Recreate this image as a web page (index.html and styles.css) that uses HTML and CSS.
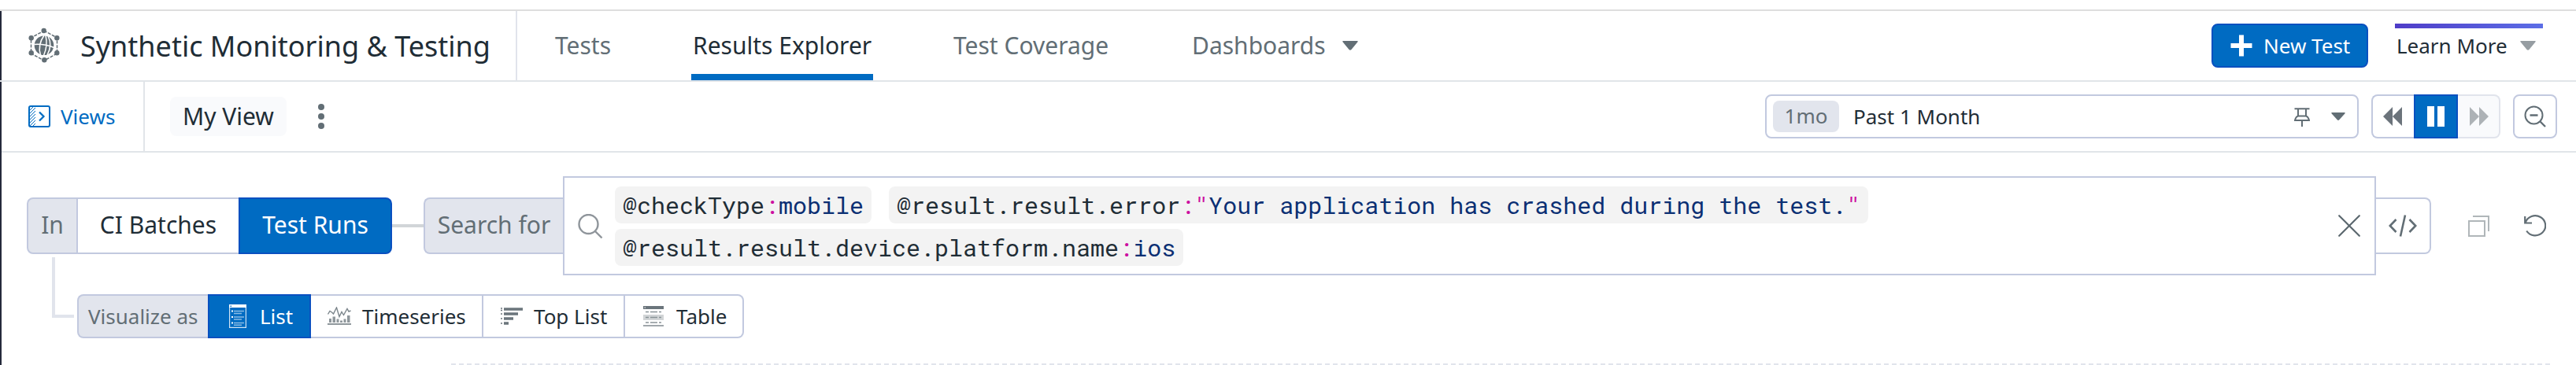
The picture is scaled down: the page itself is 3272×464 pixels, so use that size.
FILE: index.html
```
<!DOCTYPE html>
<html lang="en">
<head>
<meta charset="utf-8">
<title>Synthetic Monitoring &amp; Testing</title>
<link rel="stylesheet" href="styles.css">
</head>
<body>
<div class="app">
  <header class="topbar">
    <div class="brand">
      <svg class="brand-icon" width="42" height="46" viewBox="0 0 42 46">
        <path d="M21 4 37.500 13V33L21 42 4.500 33V13Z" fill="none" stroke="#626e75" stroke-width="1.500" stroke-dasharray="4 1.600"/>
        <g fill="#626e75">
          <circle cx="20.700" cy="4" r="3.200"/><circle cx="37.300" cy="13.200" r="3.200"/><circle cx="37.300" cy="32.300" r="3.200"/>
          <circle cx="21.300" cy="41.300" r="3.200"/><circle cx="4.700" cy="13.200" r="3.200"/><circle cx="4.700" cy="32.300" r="3.200"/>
          <circle cx="21" cy="22.700" r="12.300"/>
        </g>
        <g fill="none" stroke="#fff" stroke-width="1.500">
          <path d="M8.500 21.500Q21 20.500 33.500 25.500M23 10Q26 23 20.500 35.500M21 10Q12.500 22 16.500 35M26 11Q32 22 25 35"/>
        </g>
      </svg>
      <h1 class="brand-title">Synthetic Monitoring &amp; Testing</h1>
    </div>
    <nav class="tabs">
      <a class="tab tab-tests">Tests</a>
      <a class="tab tab-results active">Results Explorer</a>
      <a class="tab tab-coverage">Test Coverage</a>
      <a class="tab tab-dash">Dashboards<svg class="tab-caret" width="20" height="14" viewBox="0 0 20 14"><path d="M1 1H19Q20.500 1 19.300 2.600L11.500 12Q10 13.600 8.500 12L.700 2.600Q-.500 1 1 1Z" fill="#626e75"/></svg></a>
    </nav>
    <button class="new-test">
      <svg width="28" height="28" viewBox="0 0 28 28"><path d="M14 .500V27.500M.500 14H27.500" stroke="#fff" stroke-width="6"/></svg>
      <span>New Test</span>
    </button>
    <div class="learn">
      <span>Learn More</span>
      <svg width="20" height="12" viewBox="0 0 20 12"><path d="M1 0H19Q20.500 0 19.300 1.600L11.500 11Q10 12.600 8.500 11L.700 1.600Q-.500 0 1 0Z" fill="#969da2"/></svg>
    </div>
  </header>

  <section class="viewbar">
    <div class="views">
      <svg width="28" height="28" viewBox="0 0 28 28" fill="none" stroke="#006bc2">
        <rect x="1" y="1" width="26" height="26" rx="2" stroke-width="2"/>
        <path d="M2 6 6 2M2 10 9 3M2 14 9 7M2 18 9 11M2 22 9 15M2 26 9 19M6 26 9 23" stroke-width="1"/>
        <path d="M14 8.500 19.500 14 14 19.500" stroke-width="2.200"/>
      </svg>
      <span>Views</span>
    </div>
    <div class="view-name">My View</div>
    <svg class="dots" width="8" height="32" viewBox="0 0 8 32" fill="#626e75"><circle cx="4" cy="4" r="4"/><circle cx="4" cy="16" r="4"/><circle cx="4" cy="28" r="4"/></svg>
    <div class="time">
      <span class="time-chip">1mo</span>
      <span class="time-label">Past 1 Month</span>
      <svg class="pin" width="20" height="24" viewBox="0 0 20 24" fill="none" stroke="#626e75" stroke-width="2"><path d="M.500 1.200H19.500M5 1V10M15 1V10M5 10.500H15Q18 11.500 19 16H1Q2 11.500 5 10.500ZM10 16V24"/></svg>
      <svg width="18" height="10" viewBox="0 0 18 10"><path d="M1 0H17Q18.500 0 17.300 1.500L10.300 9.300Q9 10.500 7.700 9.300L.700 1.500Q-.500 0 1 0Z" fill="#626e75"/></svg>
    </div>
    <div class="player">
      <div class="player-btn back"><svg width="24" height="24" viewBox="0 0 24 24" fill="#6b737b"><path d="M12 0V24L0 12ZM24 0V24L12 12Z"/></svg></div>
      <div class="player-btn pause"><svg width="22" height="26" viewBox="0 0 22 26" fill="#fff"><path d="M0 0H9V26H0ZM13 0H22V26H13Z"/></svg></div>
      <div class="player-btn fwd"><svg width="24" height="24" viewBox="0 0 24 24" fill="#adb2b6"><path d="M0 0V24L12 12ZM12 0V24L24 12Z"/></svg></div>
    </div>
    <div class="zoom-out"><svg width="28" height="28" viewBox="0 0 28 28" fill="none" stroke="#626e75" stroke-width="2"><circle cx="12.500" cy="12.500" r="11"/><path d="M7.500 12.500H17.500M20 20 27 27" stroke-width="2.400"/></svg></div>
  </section>

  <main class="query">
    <div class="query-row">
      <div class="seg seg-label in">In</div>
      <div class="seg batches">CI Batches</div>
      <div class="seg runs">Test Runs</div>
      <div class="link"></div>
      <div class="seg seg-label search-for">Search for</div>
      <div class="search">
        <svg class="mag" width="32" height="32" viewBox="0 0 32 32" fill="none" stroke="#8f959b" stroke-width="2.400"><circle cx="13.500" cy="13" r="12"/><path d="M22 22 30.500 30.500"/></svg>
        <div class="chips">
          <div class="chip-line">
            <span class="chip">@checkType<i>:</i><b>mobile</b></span>
            <span class="chip">@result.result.error<i>:"</i><b>Your application has crashed during the test.</b><i>"</i></span>
          </div>
          <div class="chip-line">
            <span class="chip">@result.result.device.platform.name<i>:</i><b>ios</b></span>
          </div>
        </div>
        <svg width="28" height="28" viewBox="0 0 28 28" fill="none" stroke="#5c686f" stroke-width="2.200" stroke-linecap="round"><path d="M1.200 1.200 26.800 26.800M26.800 1.200 1.200 26.800"/></svg>
      </div>
      <div class="code"><svg width="36" height="28" viewBox="0 0 36 28" fill="none" stroke="#626e75" stroke-width="2.600"><path d="M9.500 6 1.800 14 9.500 22M26.500 6 34.200 14 26.500 22M21 .500 15 27.500"/></svg></div>
      <svg class="copy" width="28" height="28" viewBox="0 0 28 28" fill="none" stroke="#b0b6b9" stroke-width="2"><path d="M1 8H21V27H1ZM6 2H26V21"/></svg>
      <svg class="undo" width="28" height="28" viewBox="0 0 28 28" fill="none" stroke="#626e75" stroke-width="2.200"><path d="M1.200 2V10.500H10M1.800 10A13 12.600 0 1 1 3.200 20.500"/></svg>
    </div>
    <div class="viz-row">
      <div class="elbow"></div>
      <div class="viz viz-label">Visualize as</div>
      <div class="viz list">
        <svg width="22" height="30" viewBox="0 0 22 30"><path d="M.600.600H21.400V29.400H.600Z" fill="none" stroke="#cfe2f4" stroke-width="1.200"/><path d="M0 0H22V4H0Z" fill="#fff"/><path d="M1.500 2.300H3" stroke="#006bc2" stroke-width="1.500"/><path d="M3 8.500H5M3 16H5M3 23.500H5" stroke="#fff" stroke-width="2"/><path d="M6 8.500H19M6 11.500H16M6 16H19M6 19H16M6 23.500H19M6 26.200H16" stroke="#8bbbe4" stroke-width="1.400"/></svg>
        <span>List</span>
      </div>
      <div class="viz series">
        <svg width="30" height="24" viewBox="0 0 30 24"><path d="M.500 9.500 3 5.500 5.500 7 7.500 9 11.500 1 15 12.500 18 6.500 20.500 10.500 25 2.500 27 6 29.500 5" fill="none" stroke="#7b858b" stroke-width="1.400"/><path d="M2 15H5V20H2ZM6.500 12.500H10V20H6.500ZM11.500 15.500H14.500V20H11.500ZM16 17.500H19V20H16ZM20.500 15.500H23.500V20H20.500ZM25 11H28.500V20H25ZM0 21H30V23H0Z" fill="#8f979c"/></svg>
        <span>Timeseries</span>
      </div>
      <div class="viz top">
        <svg width="28" height="22" viewBox="0 0 28 22" stroke="#6b757c"><path d="M4 2H28M4 8H22M4 14H16M4 20H10" stroke-width="3.600"/><path d="M0 1H2M0 3.500H2M0 8H2M0 14H2M0 20H2" stroke-width="1.600"/></svg>
        <span>Top List</span>
      </div>
      <div class="viz table">
        <svg width="26" height="26" viewBox="0 0 26 26"><path d="M0 0H26V4H0Z" fill="#6b757c"/><path d="M1.500 2H3" stroke="#fff"/><path d="M0 11H26V18H0Z" fill="#d1d4d6"/><path d="M3 7.500H7M9 7.500H18M20 7.500H23M3 14.500H7M9 14.500H18M20 14.500H23M3 21H7M9 21H18M20 21H23" stroke="#899297" stroke-width="1.400"/><path d="M0 25H26" stroke="#899297" stroke-width="1.600"/></svg>
        <span>Table</span>
      </div>
    </div>
    <div class="dashed"></div>
  </main>
</div>
</body>
</html>
```
FILE: styles.css
```
* { box-sizing: border-box; }
body { margin: 0; background: #fff; font-family: "Noto Sans", sans-serif; color: #1f2d36; font-size: 26px; }
svg { display: block; flex: none; }
.app { width: 3272px; height: 464px; padding-top: 12px; overflow: hidden; background: linear-gradient(#252a3c, #252a3c) 0 14px / 2px 450px no-repeat; white-space: nowrap; }

.topbar { display: flex; height: 92px; border-top: 2px solid #dedede; border-bottom: 2px solid #e1e5e9; }
.brand { display: flex; align-items: center; width: 657px; padding: 0 0 0 35px; border-right: 2px solid #e1e4ec; }
.brand-title { margin: 2px 0 0 25px; font-size: 36px; font-weight: 400; line-height: 50px; }
.tabs { display: flex; flex: 1; font-size: 30px; color: #626e75; }
.tab { display: flex; align-items: center; height: 88px; padding: 0 3px; line-height: 40px; }
.tab-tests { margin-left: 45px; width: 77px; }
.tab-results { margin-left: 99px; width: 231px; padding: 8px 2px 0; color: #1f2d36; border-bottom: 8px solid #006bc2; }
.tab-coverage { margin-left: 99px; width: 203px; }
.tab-dash { margin-left: 100px; }
.tab-caret { margin: 0 0 0 21px; }
.new-test { display: flex; align-items: center; gap: 14px; width: 199px; height: 56px; margin: 16px 0 0; padding: 0 0 0 22px; border: 2px solid #0a50c0; border-radius: 8px; background: #006bc2; color: #fff; font: 26px "Noto Sans", sans-serif; }
.learn { display: flex; align-items: center; justify-content: space-between; width: 188px; height: 56px; margin: 16px 42px 0 34px; padding: 0 9px 0 2px; background: linear-gradient(90deg, #4f3dc8, #5c6ee6) top / 100% 6px no-repeat; }

.viewbar { display: flex; align-items: center; height: 90px; border-bottom: 2px solid #e1e5e9; margin-left: 2px; }
.views { display: flex; align-items: center; gap: 13px; width: 182px; height: 88px; padding-left: 34px; border-right: 2px solid #e1e5e9; color: #006bc2; }
.view-name { width: 148px; height: 50px; margin-left: 32px; padding-left: 16px; border-radius: 8px; background: #f9fafc; font-size: 30px; line-height: 49px; }
.dots { margin-left: 40px; }
.time { display: flex; align-items: center; width: 754px; height: 56px; margin-left: auto; padding: 0 15px 0 8px; border: 2px solid #c2c9df; border-radius: 8px; }
.time-chip { width: 84px; height: 40px; border-radius: 8px; background: #e2e5ed; color: #626e75; line-height: 38px; text-align: center; }
.time-label { margin-left: 18px; line-height: 40px; }
.pin { margin: 2px 27px 0 auto; }
.player { display: flex; width: 164px; height: 56px; margin-left: 16px; }
.player-btn { display: flex; align-items: center; justify-content: center; border: 2px solid #c2c9df; }
.back { width: 54px; padding-right: 2px; border-radius: 8px 0 0 8px; border-right: 0; }
.pause { width: 56px; background: #006bc2; border-color: #0a50c0; }
.fwd { width: 54px; padding-left: 2px; border-color: #e1e4ec; border-left: 0; border-radius: 0 8px 8px 0; background: #f9fafc; }
.zoom-out { display: flex; align-items: center; justify-content: center; width: 56px; height: 56px; margin: 0 24px 0 16px; border: 2px solid #c2c9df; border-radius: 8px; }

.query { padding-top: 30px; }
.query-row { display: flex; align-items: center; height: 126px; padding-left: 34px; font-size: 30px; }
.seg { height: 72px; line-height: 66px; border: 2px solid #c2c9df; text-align: center; }
.seg-label { background: #e2e5ed; color: #626e75; border-radius: 8px 0 0 8px; }
.in { width: 65px; }
.batches { width: 204px; border-width: 2px 0; }
.runs { width: 195px; background: #006bc2; border-color: #0a50c0; border-radius: 0 8px 8px 0; color: #fff; }
.link { width: 40px; height: 4px; background: #d1d5d8; }
.search-for { width: 177px; border-right: 0; }
.search { display: flex; align-items: center; width: 2303px; height: 126px; padding: 0 18px 0 17px; border: 2px solid #c2c9df; }
.mag { margin-top: 2px; }
.chips { display: flex; flex-direction: column; gap: 7px; flex: 1; margin-left: 15px; }
.chip-line { display: flex; gap: 22px; }
.chip { height: 47px; padding: 0 10px; border-radius: 8px; background: #f3f3f3; font-family: "Roboto Mono", "Liberation Mono", monospace; font-size: 30px; line-height: 47px; white-space: pre; }
.chip i { font-style: normal; color: #cc0fa0; }
.chip b { font-weight: 400; color: #0b2f73; }
.code { display: flex; align-items: center; justify-content: center; width: 70px; height: 72px; border: 2px solid #c2c9df; border-left: 0; border-radius: 0 8px 8px 0; }
.copy { margin-left: 47px; }
.undo { margin-left: 43px; }

.viz-row { display: flex; height: 80px; padding-left: 66px; }
.elbow { width: 28px; height: 77px; margin: -23px 4px 0 0; border: solid #e1e4ec; border-width: 0 0 4px 4px; }
.viz { display: flex; align-items: center; height: 56px; margin-top: 24px; border: 2px solid #c2c9df; border-left: 0; line-height: 40px; }
.viz-label { width: 166px; padding-left: 12px; border-left: 2px solid #c2c9df; border-right: 0; border-radius: 8px 0 0 8px; background: #e2e5ed; color: #626e75; }
.list { width: 131px; padding-left: 25px; gap: 17px; border: 2px solid #0a50c0; background: #006bc2; color: #fff; }
.series { width: 219px; padding-left: 21px; gap: 14px; }
.top { width: 180px; padding-left: 22px; gap: 14px; }
.table { width: 151px; padding-left: 23px; gap: 16px; border-radius: 0 8px 8px 0; }
.dashed { width: 2668px; height: 2px; margin: 32px 0 0 573px; background: repeating-linear-gradient(90deg, #e1e4ec 0 6px, transparent 6px 10px); }
```
